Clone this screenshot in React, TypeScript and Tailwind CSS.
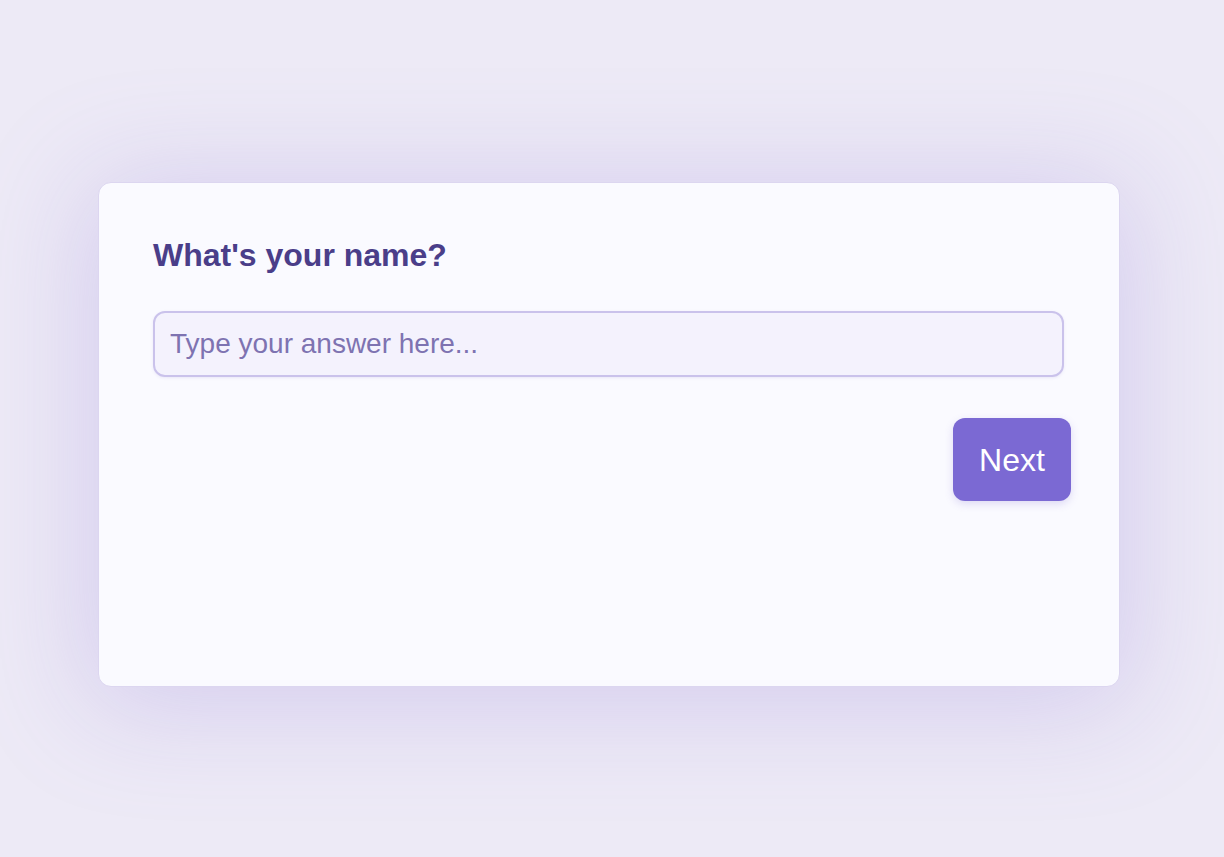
export default function App() {
  return (
    <div className="min-h-[857px] w-full bg-[#edeaf6] pt-[182px] pl-[98px] font-['Liberation_Sans',Arial,sans-serif]">
      <div className="w-[1022px] h-[505px] rounded-[13px] border border-[#dcd6f0] bg-[#fafaff] shadow-[0_10px_110px_10px_rgba(150,130,220,0.28)] pt-[54px] pl-[54px] pr-[55px] flex flex-col">
        <h2 className="text-[32px] leading-[37px] font-bold text-[#4a3e89]">What's your name?</h2>
        <input
          type="text"
          placeholder="Type your answer here..."
          className="mt-[37px] h-[66px] w-full rounded-[12px] border-2 border-[#cac2eb] bg-[#f4f2fd] px-[15px] text-[28px] text-[#4a3e89] placeholder:text-[#7e73b1] outline-none shadow-[0_1px_3px_rgba(120,100,200,0.12)]"
        />
        <div className="mt-[41px] flex justify-end -mr-[7px]">
          <button className="h-[83px] w-[118px] rounded-[12px] bg-[#7b69d3] text-[32px] text-white shadow-[0_3px_8px_rgba(110,90,200,0.2)]">
            Next
          </button>
        </div>
      </div>
    </div>
  );
}
